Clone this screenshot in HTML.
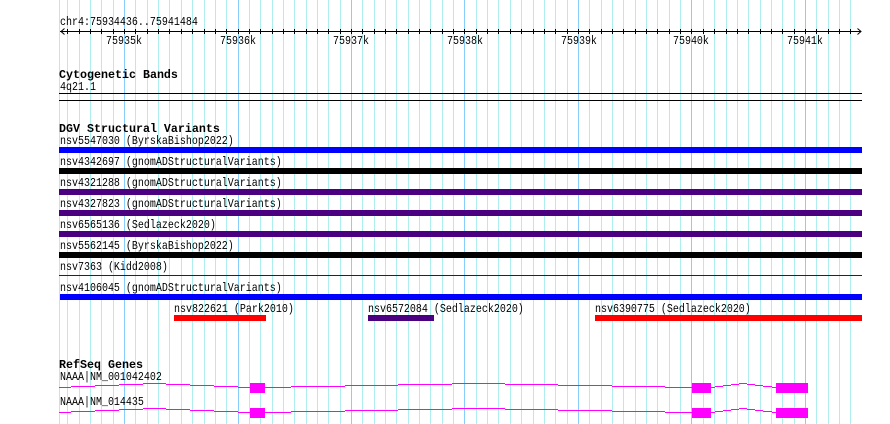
<!DOCTYPE html>
<html>
<head>
<meta charset="utf-8">
<style>
html,body{margin:0;padding:0;background:#fff;}
body{width:890px;height:424px;overflow:hidden;}
svg{display:block;}
text{font-family:"Liberation Mono","DejaVu Sans Mono",monospace;font-size:12px;fill:#000;}
.b text{font-weight:bold;font-size:12px;}
</style>
</head>
<body>
<svg width="890" height="424" viewBox="0 0 890 424" xmlns="http://www.w3.org/2000/svg">
<g shape-rendering="crispEdges">
<path fill="none" stroke="#afeeee" stroke-width="1" d="M59.5 0V424M67.5 0V424M79.5 0V424M90.5 0V424M101.5 0V424M113.5 0V424M135.5 0V424M147.5 0V424M158.5 0V424M169.5 0V424M181.5 0V424M192.5 0V424M204.5 0V424M215.5 0V424M226.5 0V424M249.5 0V424M260.5 0V424M272.5 0V424M283.5 0V424M294.5 0V424M306.5 0V424M317.5 0V424M328.5 0V424M340.5 0V424M362.5 0V424M374.5 0V424M385.5 0V424M396.5 0V424M408.5 0V424M419.5 0V424M430.5 0V424M442.5 0V424M453.5 0V424M476.5 0V424M487.5 0V424M498.5 0V424M510.5 0V424M521.5 0V424M533.5 0V424M544.5 0V424M555.5 0V424M567.5 0V424M589.5 0V424M601.5 0V424M612.5 0V424M623.5 0V424M635.5 0V424M646.5 0V424M657.5 0V424M669.5 0V424M680.5 0V424M703.5 0V424M714.5 0V424M726.5 0V424M737.5 0V424M748.5 0V424M760.5 0V424M771.5 0V424M782.5 0V424M794.5 0V424M816.5 0V424M828.5 0V424M839.5 0V424M850.5 0V424"/>
<path fill="none" stroke="#87cefa" stroke-width="1" d="M124.5 0V424M238.5 0V424M351.5 0V424M464.5 0V424M578.5 0V424M691.5 0V424M805.5 0V424"/>

<path fill="none" stroke="#000" stroke-width="1" d="M60 31.5H861M67.5 29V34M79.5 29V34M90.5 29V34M101.5 29V34M113.5 29V34M124.5 29V34M135.5 29V34M147.5 29V34M158.5 29V34M169.5 29V34M181.5 29V34M192.5 29V34M204.5 29V34M215.5 29V34M226.5 29V34M238.5 29V34M249.5 29V34M260.5 29V34M272.5 29V34M283.5 29V34M294.5 29V34M306.5 29V34M317.5 29V34M328.5 29V34M340.5 29V34M351.5 29V34M362.5 29V34M374.5 29V34M385.5 29V34M396.5 29V34M408.5 29V34M419.5 29V34M430.5 29V34M442.5 29V34M453.5 29V34M464.5 29V34M476.5 29V34M487.5 29V34M498.5 29V34M510.5 29V34M521.5 29V34M533.5 29V34M544.5 29V34M555.5 29V34M567.5 29V34M578.5 29V34M589.5 29V34M601.5 29V34M612.5 29V34M623.5 29V34M635.5 29V34M646.5 29V34M657.5 29V34M669.5 29V34M680.5 29V34M691.5 29V34M703.5 29V34M714.5 29V34M726.5 29V34M737.5 29V34M748.5 29V34M760.5 29V34M771.5 29V34M782.5 29V34M794.5 29V34M805.5 29V34M816.5 29V34M828.5 29V34M839.5 29V34M850.5 29V34"/>
<path fill="#000" d="M59 93h803v1H59zM59 100h803v1H59z"/>

<rect x="59" y="147" width="803" height="6" fill="#0000ff"/>
<rect x="59" y="168" width="803" height="6" fill="#000000"/>
<rect x="59" y="189" width="803" height="6" fill="#4b0082"/>
<rect x="59" y="210" width="803" height="6" fill="#4b0082"/>
<rect x="59" y="231" width="803" height="6" fill="#4b0082"/>
<rect x="59" y="252" width="803" height="6" fill="#000000"/>
<rect x="59" y="275" width="803" height="1" fill="#4b0082"/>
<rect x="60" y="294" width="802" height="6" fill="#0000ff"/>
<rect x="174" y="315" width="92" height="6" fill="#ff0000"/>
<rect x="368" y="315" width="66" height="6" fill="#4b0082"/>
<rect x="595" y="315" width="267" height="6" fill="#ff0000"/>

<g fill="#ff00ff">
<path d="M59 387h12v1H59zM71 386h24v1H71zM95 385h24v1H95zM119 384h24v1h-24zM143 383h23v1h-23zM166 384h24v1h-24zM190 385h24v1h-24zM214 386h24v1h-24zM238 387h12v1h-12zM250 383h15v10h-15zM265 387h26v1h-26zM291 386h54v1h-54zM345 385h53v1h-53zM398 384h54v1h-54zM452 383h53v1h-53zM505 384h53v1h-53zM558 385h54v1h-54zM612 386h53v1h-53zM665 387h27v1h-27zM692 383h19v10h-19zM711 387h4v1h-4zM715 386h8v1h-8zM723 385h8v1h-8zM731 384h8v1h-8zM739 383h8v1h-8zM747 384h8v1h-8zM755 385h8v1h-8zM763 386h9v1h-9zM772 387h4v1h-4zM776 383h32v10h-32z"/>
<path d="M59 412h12v1H59zM71 411h24v1H71zM95 410h24v1H95zM119 409h24v1h-24zM143 408h23v1h-23zM166 409h24v1h-24zM190 410h24v1h-24zM214 411h24v1h-24zM238 412h12v1h-12zM250 408h15v10h-15zM265 412h26v1h-26zM291 411h54v1h-54zM345 410h53v1h-53zM398 409h54v1h-54zM452 408h53v1h-53zM505 409h53v1h-53zM558 410h54v1h-54zM612 411h53v1h-53zM665 412h27v1h-27zM692 408h19v10h-19zM711 412h4v1h-4zM715 411h8v1h-8zM723 410h8v1h-8zM731 409h8v1h-8zM739 408h8v1h-8zM747 409h8v1h-8zM755 410h8v1h-8zM763 411h9v1h-9zM772 412h4v1h-4zM776 408h32v10h-32z"/>
</g>
</g>
<path fill="none" stroke="#000" stroke-width="1" d="M64.5 28.5L61 31.5L64.5 34.5M857.5 28.5L861 31.5L857.5 34.5"/>

<g transform="scale(.8333 1)">
<text x="72" y="25">chr4:75934436..75941484</text>
<text x="127.2" y="44">75935k</text>
<text x="264" y="44">75936k</text>
<text x="399.6" y="44">75937k</text>
<text x="536.4" y="44">75938k</text>
<text x="673.2" y="44">75939k</text>
<text x="807.6" y="44">75940k</text>
<text x="944.4" y="44">75941k</text>
<text x="72" y="90">4q21.1</text>
<text x="72" y="144">nsv5547030 (ByrskaBishop2022)</text>
<text x="72" y="165">nsv4342697 (gnomADStructuralVariants)</text>
<text x="72" y="186">nsv4321288 (gnomADStructuralVariants)</text>
<text x="72" y="207">nsv4327823 (gnomADStructuralVariants)</text>
<text x="72" y="228">nsv6565136 (Sedlazeck2020)</text>
<text x="72" y="249">nsv5562145 (ByrskaBishop2022)</text>
<text x="72" y="270">nsv7363 (Kidd2008)</text>
<text x="72" y="291">nsv4106045 (gnomADStructuralVariants)</text>
<text x="208.8" y="312">nsv822621 (Park2010)</text>
<text x="441.6" y="312">nsv6572084 (Sedlazeck2020)</text>
<text x="714" y="312">nsv6390775 (Sedlazeck2020)</text>
<text x="72" y="380">NAAA|NM_001042402</text>
<text x="72" y="405">NAAA|NM_014435</text>
</g>
<g class="b" transform="scale(.972 1)">
<text x="60.7" y="78">Cytogenetic Bands</text>
<text x="60.7" y="132">DGV Structural Variants</text>
<text x="60.7" y="368">RefSeq Genes</text>
</g>
</svg>
</body>
</html>
